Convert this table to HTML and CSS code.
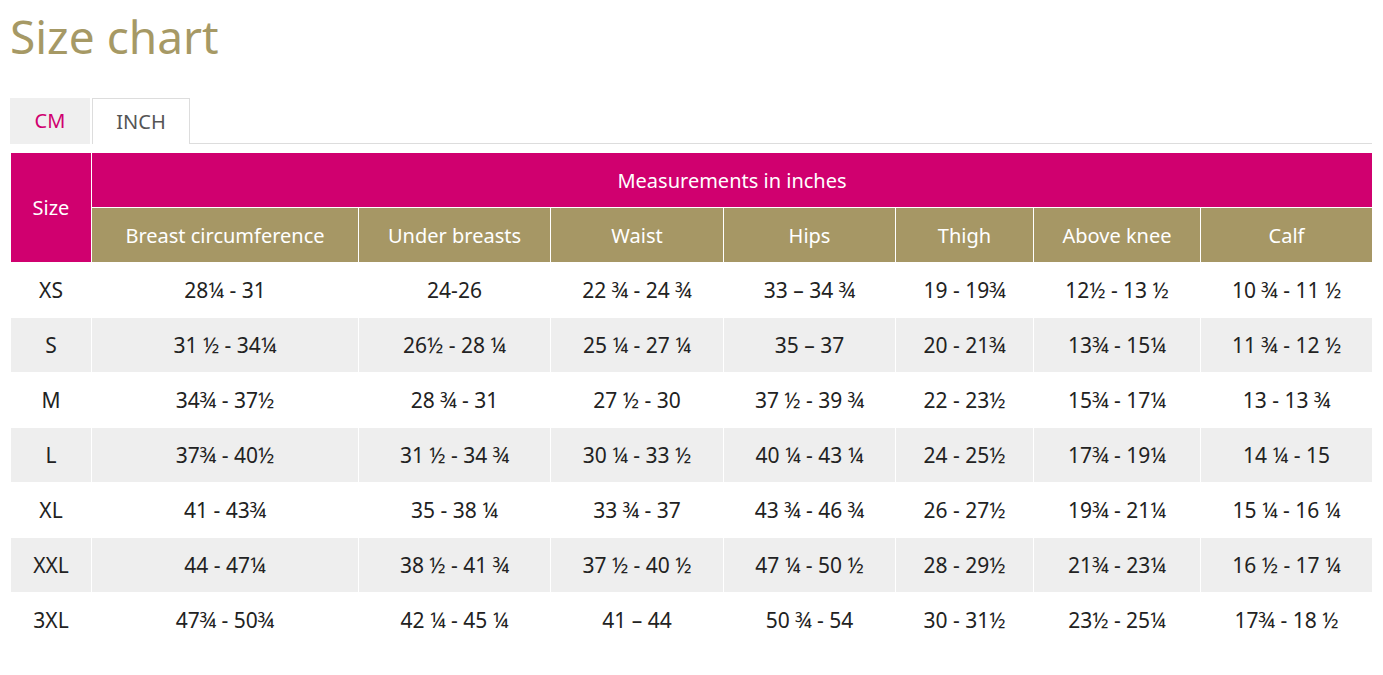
FILE: index.html
```html
<!DOCTYPE html>
<html>
<head>
<meta charset="utf-8">
<link rel="stylesheet" href="styles.css">
</head>
<body>
<h1 class="title">Size chart</h1>
<div class="tabs">
  <div class="tab tab-cm">CM</div>
  <div class="tab tab-inch">INCH</div>
  <div class="tab-rest"></div>
</div>
<table class="chart">
  <colgroup>
    <col class="c-size"><col class="c-breast"><col class="c-under"><col class="c-waist"><col class="c-hips"><col class="c-thigh"><col class="c-knee"><col class="c-calf">
  </colgroup>
  <thead>
    <tr class="h1">
      <th rowspan="2" class="size-h">Size</th>
      <th colspan="7">Measurements in inches</th>
    </tr>
    <tr class="h2">
      <th>Breast circumference</th><th>Under breasts</th><th>Waist</th><th>Hips</th><th>Thigh</th><th>Above knee</th><th>Calf</th>
    </tr>
  </thead>
  <tbody>
    <tr><td>XS</td><td>28¼ - 31</td><td>24-26</td><td>22 ¾ - 24 ¾</td><td>33 – 34 ¾</td><td>19 - 19¾</td><td>12½ - 13 ½</td><td>10 ¾ - 11 ½</td></tr>
    <tr class="alt"><td>S</td><td>31 ½ - 34¼</td><td>26½ - 28 ¼</td><td>25 ¼ - 27 ¼</td><td>35 – 37</td><td>20 - 21¾</td><td>13¾ - 15¼</td><td>11 ¾ - 12 ½</td></tr>
    <tr><td>M</td><td>34¾ - 37½</td><td>28 ¾ - 31</td><td>27 ½ - 30</td><td>37 ½ - 39 ¾</td><td>22 - 23½</td><td>15¾ - 17¼</td><td>13 - 13 ¾</td></tr>
    <tr class="alt"><td>L</td><td>37¾ - 40½</td><td>31 ½ - 34 ¾</td><td>30 ¼ - 33 ½</td><td>40 ¼ - 43 ¼</td><td>24 - 25½</td><td>17¾ - 19¼</td><td>14 ¼ - 15</td></tr>
    <tr><td>XL</td><td>41 - 43¾</td><td>35 - 38 ¼</td><td>33 ¾ - 37</td><td>43 ¾ - 46 ¾</td><td>26 - 27½</td><td>19¾ - 21¼</td><td>15 ¼ - 16 ¼</td></tr>
    <tr class="alt"><td>XXL</td><td>44 - 47¼</td><td>38 ½ - 41 ¾</td><td>37 ½ - 40 ½</td><td>47 ¼ - 50 ½</td><td>28 - 29½</td><td>21¾ - 23¼</td><td>16 ½ - 17 ¼</td></tr>
    <tr><td>3XL</td><td>47¾ - 50¾</td><td>42 ¼ - 45 ¼</td><td>41 – 44</td><td>50 ¾ - 54</td><td>30 - 31½</td><td>23½ - 25¼</td><td>17¾ - 18 ½</td></tr>
  </tbody>
</table>
</body>
</html>
```

FILE: styles.css
```css
html, body {
  margin: 0;
  padding: 0;
  background: #fff;
}
body {
  padding: 0 11px 0 10px;
  font-family: "Noto Sans", "Open Sans", sans-serif;
  color: #222;
}
.title {
  margin: 0;
  padding-top: 9px;
  height: 98px;
  box-sizing: border-box;
  font-size: 46px;
  line-height: 54px;
  font-weight: 400;
  color: #a69965;
}
.tabs {
  display: flex;
  height: 46px;
}
.tab {
  display: flex;
  align-items: center;
  justify-content: center;
  font-size: 20px;
  box-sizing: border-box;
}
.tab-cm {
  width: 80px;
  height: 46px;
  background: #efefef;
  color: #d0006f;
  border-bottom: 1px solid #efefef;
}
.tab-inch {
  margin-left: 2px;
  width: 98px;
  height: 46px;
  background: #fff;
  color: #555;
  border: 1px solid #ddd;
  border-bottom: none;
}
.tab-rest {
  flex: 1;
  border-bottom: 1px solid #ddd;
  height: 46px;
  box-sizing: border-box;
}
.chart {
  margin-top: 8px;
  width: 1363px;
  border-collapse: collapse;
  table-layout: fixed;
}
.c-size { width: 81px; }
.c-breast { width: 267px; }
.c-under { width: 192px; }
.c-waist { width: 173px; }
.c-hips { width: 172px; }
.c-thigh { width: 138px; }
.c-knee { width: 167px; }
.c-calf { width: 172px; }
.chart th, .chart td {
  border: 1px solid #fff;
  text-align: center;
  padding: 0;
  height: 54px;
}
.chart th {
  color: #fff;
  font-weight: 400;
  font-size: 20px;
}
.h1 th {
  background: #d0006f;
}
.h2 th {
  background: #a69765;
}
.chart td {
  font-size: 21px;
  color: #222;
}
.alt td {
  background: #eee;
}
```
